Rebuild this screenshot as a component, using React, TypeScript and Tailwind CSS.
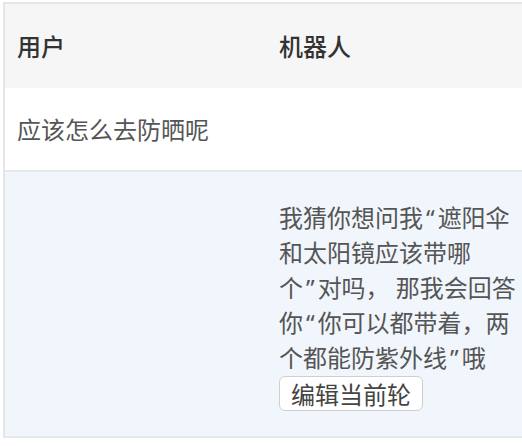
import React from 'react';

const cjk = { fontFamily: '"Noto Sans CJK SC", "Noto Sans", sans-serif' };
// Latin first so the curly quotes come out narrow, as in the reference
const mixed = { fontFamily: '"Noto Sans", "Noto Sans CJK SC", sans-serif' };

const answer = [
  '我猜你想问我“遮阳伞',
  '和太阳镜应该带哪',
  '个”对吗， 那我会回答',
  '你“你可以都带着，两',
  '个都能防紫外线”哦',
];

// give the quote marks a little room on each side
function Line({ text }: { text: string }) {
  return (
    <>
      {text.split(/([“”])/).map((part, i) =>
        part === '“' || part === '”' ? (
          <span key={i} className="mx-[3px]">{part}</span>
        ) : (
          <React.Fragment key={i}>{part}</React.Fragment>
        )
      )}
    </>
  );
}

export default function App() {
  return (
    <div className="w-[522px] h-[446px] overflow-hidden bg-white pt-[2px] pl-[3px]" style={cjk}>
      <div className="w-[560px] border-l-2 border-t-2 border-[#e6e6e6]">
        {/* Header */}
        <div className="grid grid-cols-[257px_1fr] bg-[#f6f6f6] h-[84px] items-center text-[24px] font-medium text-[#333]">
          <div className="pl-[12px]">用户</div>
          <div className="pl-[17px]">机器人</div>
        </div>

        {/* Row 1 */}
        <div className="grid grid-cols-[257px_1fr] bg-white h-[84px] items-center text-[24px] text-[#555] border-b-2 border-[#e8e8e8]">
          <div className="pl-[12px] whitespace-nowrap">应该怎么去防晒呢</div>
          <div></div>
        </div>

        {/* Row 2 */}
        <div className="grid grid-cols-[257px_1fr] bg-[#f1f5fc] h-[266px] text-[24px] text-[#555] border-b-2 border-[#e8e8e8]">
          <div></div>
          <div className="pl-[17px] pt-[28px]">
            <p className="leading-[35px] whitespace-nowrap" style={mixed}>
              {answer.map((line, i) => (
                <React.Fragment key={i}>
                  <Line text={line} />
                  {i < answer.length - 1 && <br />}
                </React.Fragment>
              ))}
            </p>
            <button className="mt-[1px] h-[35px] px-[11px] leading-[33px] bg-white border border-[#cfcfcf] rounded-[6px] text-[#444] text-[24px]">
              编辑当前轮
            </button>
          </div>
        </div>
      </div>
    </div>
  );
}
